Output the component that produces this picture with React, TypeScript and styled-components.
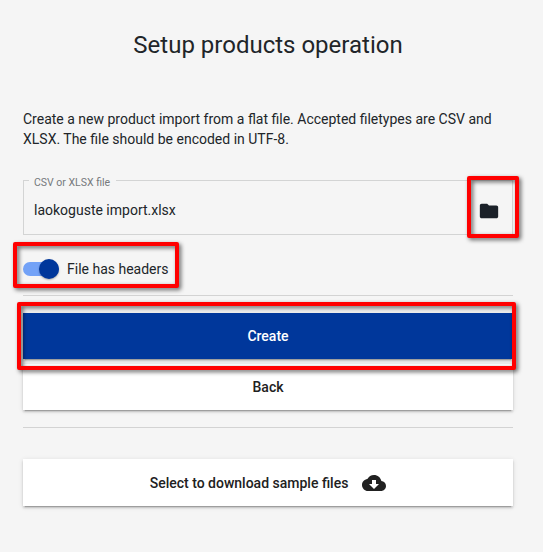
import React, { useState } from "react";
import styled, { createGlobalStyle } from "styled-components";

const GlobalStyle = createGlobalStyle`
  *, *::before, *::after { box-sizing: border-box; }
  body {
    margin: 0;
    background: #f5f5f5;
    color: #212529;
    font-family: Roboto, "Liberation Sans", sans-serif;
    font-size: 14px;
  }
  button { font-family: inherit; }
`;

const Page = styled.main`
  display: flex;
  flex-direction: column;
  height: 552px;
  padding: 29px 30px 0 23px;
  overflow: hidden;
`;

const Title = styled.h1`
  margin: 0;
  font-size: 24px;
  line-height: 32px;
  font-weight: 400;
  text-align: center;
`;

const Intro = styled.p`
  margin: 48px 0 0;
  line-height: 20px;
`;

const FileField = styled.div`
  display: flex;
  align-items: center;
  justify-content: space-between;
  position: relative;
  height: 55px;
  margin: 31px 0 0;
  padding: 0 12px 0 10px;
  border: 1px solid #d3d4d4;
`;

const FieldLabel = styled.span`
  position: absolute;
  top: -6px;
  left: 5px;
  padding: 0 6px 0 5px;
  background: #f5f5f5;
  color: #76797c;
  font-size: 10.5px;
  line-height: 15px;
`;

const FileName = styled.span`
  padding-top: 5px;
  line-height: 20px;
`;

const IconButton = styled.button`
  display: flex;
  margin-top: 6px;
  padding: 0;
  border: 0;
  background: none;
  color: #1b2129;
`;

const Icon = styled.svg<{ $size: number }>`
  width: ${(p) => p.$size}px;
  height: ${(p) => p.$size}px;
  fill: currentColor;
`;

const ToggleRow = styled.label`
  display: flex;
  align-items: center;
  align-self: flex-start;
  position: relative;
  height: 20px;
  margin-top: 24px;
  gap: 8px;
  line-height: 20px;
`;

const Track = styled.span<{ $on: boolean }>`
  display: flex;
  align-items: center;
  justify-content: ${(p) => (p.$on ? "flex-end" : "flex-start")};
  width: 36px;
  height: 14px;
  border-radius: 8px;
  background: ${(p) => (p.$on ? "#73a2f7" : "#b5b5b5")};
`;

const Thumb = styled.span<{ $on: boolean }>`
  flex: none;
  width: 20px;
  height: 20px;
  border-radius: 50%;
  background: ${(p) => (p.$on ? "#00379b" : "#fafafa")};
  box-shadow: 0 1px 2px rgba(0, 0, 0, 0.3);
`;

const HiddenInput = styled.input`
  position: absolute;
  opacity: 0;
  width: 0;
  height: 0;
  margin: 0;
`;

const Divider = styled.hr<{ $top: number }>`
  width: 100%;
  height: 1px;
  margin: ${(p) => p.$top}px 0 0;
  border: 0;
  background: #d3d3d3;
`;

const ActionSlot = styled.div<{ $top: number }>`
  display: flex;
  position: relative;
  margin-top: ${(p) => p.$top}px;
`;

const ActionButton = styled.button<{ $primary?: boolean; $height?: number }>`
  display: flex;
  flex: 1;
  align-items: center;
  justify-content: center;
  gap: 14px;
  height: ${(p) => p.$height ?? 46}px;
  padding: 0;
  border: 0;
  background: ${(p) => (p.$primary ? "#00379b" : "#fff")};
  color: ${(p) => (p.$primary ? "#fff" : "#212121")};
  font-size: 14px;
  font-weight: 500;
  box-shadow: 0 3px 1px -2px rgba(0, 0, 0, 0.2), 0 2px 2px 0 rgba(0, 0, 0, 0.14),
    0 1px 5px 0 rgba(0, 0, 0, 0.12);
`;

const Highlight = styled.span<{ $inset: string }>`
  position: absolute;
  z-index: 1;
  inset: ${(p) => p.$inset};
  border: 4px solid #f00;
  border-radius: 2px;
  pointer-events: none;
  filter: drop-shadow(2px 2px 2px rgba(0, 0, 0, 0.6));
`;

const FolderIcon = () => (
  <Icon $size={22} viewBox="0 0 24 24">
    <path d="M10 4H4c-1.1 0-1.99.9-1.99 2L2 18c0 1.1.9 2 2 2h16c1.1 0 2-.9 2-2V8c0-1.1-.9-2-2-2h-8l-2-2z" />
  </Icon>
);

const CloudDownloadIcon = () => (
  <Icon $size={24} viewBox="0 0 24 24">
    <path d="M19.35 10.04C18.67 6.59 15.64 4 12 4 9.11 4 6.6 5.64 5.35 8.04 2.34 8.36 0 10.91 0 14c0 3.31 2.69 6 6 6h13c2.76 0 5-2.24 5-5 0-2.64-2.05-4.78-4.65-4.96zM17 13l-5 5-5-5h3V9h4v4h3z" />
  </Icon>
);

export default function App() {
  const [hasHeaders, setHasHeaders] = useState(true);
  return (
    <>
      <GlobalStyle />
      <Page>
        <Title>Setup products operation</Title>
        <Intro>
          Create a new product import from a flat file. Accepted filetypes are CSV and XLSX. The
          file should be encoded in UTF-8.
        </Intro>
        <FileField>
          <FieldLabel>CSV or XLSX file</FieldLabel>
          <FileName>laokoguste import.xlsx</FileName>
          <IconButton type="button" aria-label="Choose file">
            <FolderIcon />
          </IconButton>
          <Highlight $inset="-5px -7px -4px 443px" />
        </FileField>
        <ToggleRow>
          <HiddenInput
            type="checkbox"
            checked={hasHeaders}
            onChange={(e) => setHasHeaders(e.target.checked)}
          />
          <Track $on={hasHeaders}>
            <Thumb $on={hasHeaders} />
          </Track>
          <span>File has headers</span>
          <Highlight $inset="-17px -10px -9px -10px" />
        </ToggleRow>
        <Divider $top={16} />
        <ActionSlot $top={17}>
          <ActionButton type="button" $primary>
            Create
          </ActionButton>
          <Highlight $inset="-11px -3px -11px -6px" />
        </ActionSlot>
        <ActionSlot $top={5}>
          <ActionButton type="button">Back</ActionButton>
        </ActionSlot>
        <Divider $top={17} />
        <ActionSlot $top={31}>
          <ActionButton type="button" $height={47}>
            Select to download sample files
            <CloudDownloadIcon />
          </ActionButton>
        </ActionSlot>
      </Page>
    </>
  );
}
